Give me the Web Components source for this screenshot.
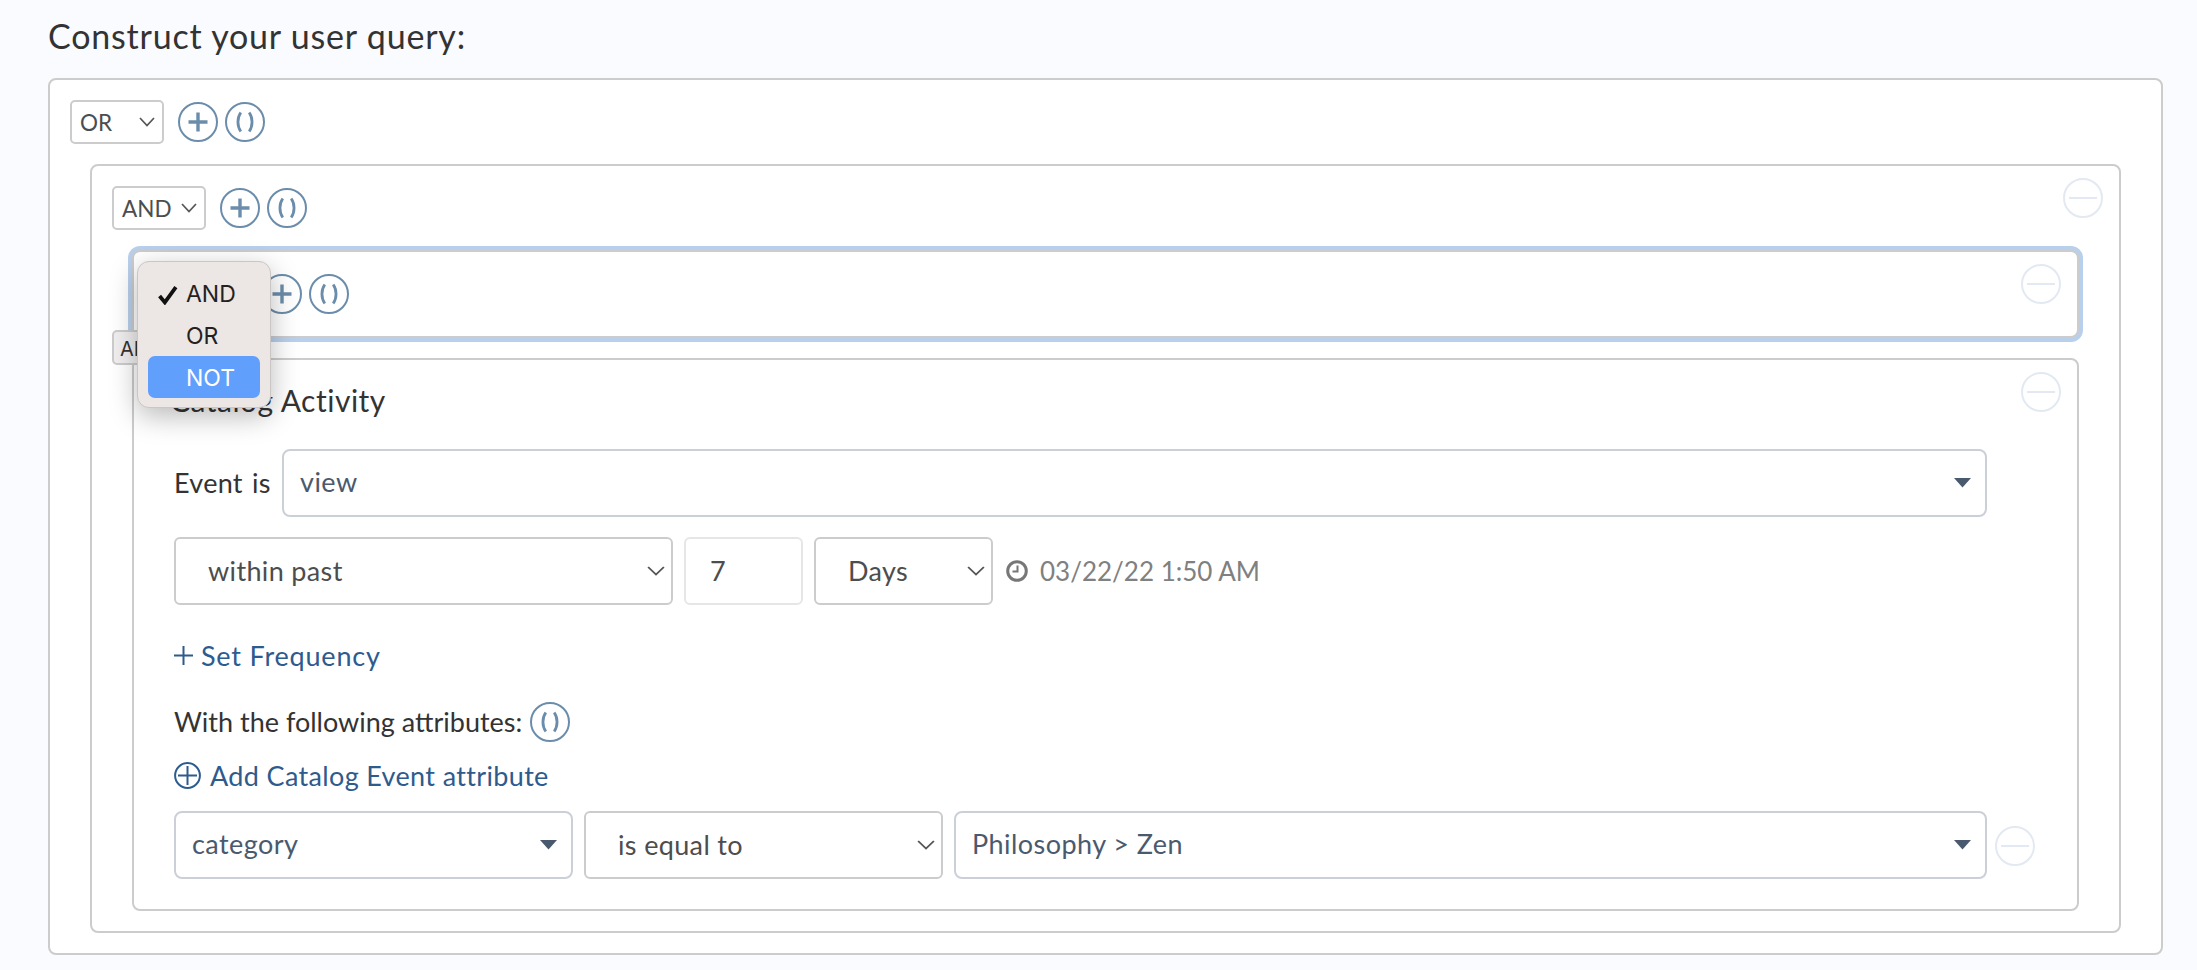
<!DOCTYPE html>
<html lang="en">
<head>
<meta charset="utf-8">
<title>Construct your user query</title>
<style>
  html, body { margin: 0; background: #fafbfe; }
  body { font-family: "Lato", "Liberation Sans", sans-serif; color: #333; }
</style>
</head>
<body>
<query-page>
  <span slot="title">Construct your user query:</span>

  <query-group op="OR" root>
    <query-group op="AND" removable>
      <query-group op="AND" removable focused></query-group>
      <catalog-rule></catalog-rule>
    </query-group>
  </query-group>

  <select-popup slot="overlay"></select-popup>
</query-page>

<script>
// Shared icon markup, all drawn on a 40 box
const ICONS = {
  plus: `<circle cx="20" cy="20" r="19" /><path d="M20 10.500v19M10.500 20h19" stroke-width="3.4" />`,
  parens: `<circle cx="20" cy="20" r="19" /><path d="M15.800 10.500C12 16 12 24 15.800 29.500M24.200 10.500C28 16 28 24 24.200 29.500" stroke-width="2.8" />`,
  minus: `<circle cx="20" cy="20" r="19" /><path d="M6 20h28" />`
};

class QueryIcon extends HTMLElement {
  connectedCallback() {
    const name = this.getAttribute('name');
    this.attachShadow({ mode: 'open' }).innerHTML = `
      <style>
        :host { display: block; width: 40px; height: 40px; flex: none; }
        svg { display: block; fill: none; stroke: ${name === 'minus' ? '#e3e9f2' : '#6b8dab'}; stroke-width: 2; }
      </style>
      <svg width="40" height="40" viewBox="0 0 40 40">${ICONS[name]}</svg>
    `;
  }
}

// Small and large native looking selects, with the chevron on the right
class QuerySelect extends HTMLElement {
  connectedCallback() {
    this.attachShadow({ mode: 'open' }).innerHTML = `
      <style>
        :host {
          display: flex;
          align-items: center;
          box-sizing: border-box;
          flex: none;
          height: 68px;
          padding: 0 0 2px 32px;
          border: 2px solid #ccc;
          border-radius: 6px;
          background: #fff;
          color: #4d4d4d;
          font-size: 27px;
          letter-spacing: .35px;
          position: relative;
        }
        :host([small]) { width: 94px; height: 44px; padding: 0 0 0 8px; font-size: 22.5px; letter-spacing: 0; border-radius: 5px; }
        svg {
          position: absolute;
          right: 6px;
          top: 50%;
          width: 18px;
          height: 10px;
          margin-top: -5px;
          fill: none;
          stroke: #555;
          stroke-width: 1.7;
        }
        :host([small]) svg { right: 7px; width: 16px; }
      </style>
      <slot></slot>
      <svg viewBox="0 0 16 10" preserveAspectRatio="none"><path d="M1 1l7 7.600L15 1" /></svg>
    `;
  }
}

// Searchable dropdown with the filled caret
class QueryCombo extends HTMLElement {
  connectedCallback() {
    this.attachShadow({ mode: 'open' }).innerHTML = `
      <style>
        :host {
          display: flex;
          align-items: center;
          box-sizing: border-box;
          height: 68px;
          padding: 0 0 4px 16px;
          border: 2px solid #cbd0d8;
          border-radius: 8px;
          background: #fff;
          color: #4a5a6e;
          font-size: 27px;
          letter-spacing: .45px;
          position: relative;
        }
        svg { position: absolute; right: 14px; top: 50%; margin-top: -5px; fill: #4a5a6e; }
      </style>
      <slot></slot>
      <svg width="17" height="10" viewBox="0 0 17 10"><path d="M0 0h17L8.500 9.600z" /></svg>
    `;
  }
}

class QueryGroup extends HTMLElement {
  connectedCallback() {
    const op = this.getAttribute('op');
    const removable = this.hasAttribute('removable');
    this.attachShadow({ mode: 'open' }).innerHTML = `
      <style>
        :host {
          display: block;
          position: relative;
          box-sizing: border-box;
          padding: 20px;
          border: 2px solid #ccc;
          border-radius: 8px;
          background: #fff;
        }
        :host([focused]) { box-shadow: 0 0 0 4px #b9d0ec; }
        .head { display: flex; align-items: center; height: 44px; }
        .actions { display: flex; gap: 7px; margin-left: 14px; }
        .remove { position: absolute; top: 12px; right: 16px; }
        ::slotted(*) { margin: 20px 20px 0 20px; }
      </style>
      <div class="head">
        <query-select small>${op}</query-select>
        <div class="actions">
          <query-icon name="plus"></query-icon>
          <query-icon name="parens"></query-icon>
        </div>
      </div>
      ${removable ? '<query-icon class="remove" name="minus"></query-icon>' : ''}
      <slot></slot>
    `;
  }
}

class CatalogRule extends HTMLElement {
  connectedCallback() {
    this.attachShadow({ mode: 'open' }).innerHTML = `
      <style>
        :host {
          display: block;
          position: relative;
          box-sizing: border-box;
          padding: 0 90px 30px 40px;
          border: 2px solid #ccc;
          border-radius: 8px;
          background: #fff;
          font-size: 27px;
          color: #333;
        }
        .remove { position: absolute; top: 12px; right: 16px; }
        h3 {
          box-sizing: border-box;
          height: 89px;
          margin: 0 0 0 -4px;
          padding-top: 20px;
          font-size: 30px;
          line-height: 40px;
          font-weight: 400;
          letter-spacing: .5px;
        }
        .row { display: flex; align-items: center; }
        .event span { flex: none; width: 108px; margin-bottom: 2px; word-spacing: 2px; letter-spacing: .3px; }
        .event query-combo { flex: 1; }
        .when { margin-top: 20px; }
        .number {
          box-sizing: border-box;
          width: 119px;
          height: 68px;
          margin: 0 11px;
          padding: 0 0 2px 24px;
          display: flex;
          align-items: center;
          border: 2px solid #e6e6e6;
          border-radius: 6px;
          color: #4d4d4d;
        }
        .stamp { display: flex; align-items: center; gap: 12px; margin-left: 13px; color: #808080; font-size: 26px; }
        .stamp svg { display: block; }
        .link { color: #2e5b8e; display: flex; align-items: center; }
        .freq { margin-top: 33px; height: 34px; gap: 8px; letter-spacing: .8px; }
        .attrs { margin-top: 30px; height: 40px; gap: 8px; }
        .attrs span { margin-bottom: 2px; }
        .add { margin-top: 16px; height: 34px; gap: 9px; letter-spacing: .35px; }
        .filter { margin-top: 19px; gap: 11px; }
        .filter .value { flex: 1; }
        .filter .name { width: 399px; flex: none; }
        .filter query-icon { margin: 2px -48px 0 -3px; }
      </style>
      <query-icon class="remove" name="minus"></query-icon>
      <h3>Catalog Activity</h3>
      <div class="row event">
        <span>Event is</span>
        <query-combo>view</query-combo>
      </div>
      <div class="row when">
        <query-select style="width:499px">within past</query-select>
        <div class="number">7</div>
        <query-select style="width:179px">Days</query-select>
        <div class="stamp">
          <svg width="22" height="22" viewBox="0 0 22 22" fill="none" stroke="#777">
            <circle cx="11" cy="11" r="9.300" stroke-width="3"/>
            <path d="M11.500 5.500v6H6.500" stroke-width="2"/>
          </svg>
          <span>03/22/22 1:50 AM</span>
        </div>
      </div>
      <div class="link freq">
        <svg width="19" height="19" viewBox="0 0 19 19" fill="none" stroke="#2e5b8e" stroke-width="2"><path d="M9.500 0v19M0 9.500h19"/></svg>
        <span>Set Frequency</span>
      </div>
      <div class="row attrs">
        <span>With the following attributes:</span>
        <query-icon name="parens"></query-icon>
      </div>
      <div class="link add">
        <svg width="27" height="27" viewBox="0 0 27 27" fill="none" stroke="#2e5b8e" stroke-width="2"><circle cx="13.500" cy="13.500" r="12.400"/><path d="M13.500 4v19M4 13.500h19"/></svg>
        <span>Add Catalog Event attribute</span>
      </div>
      <div class="row filter">
        <query-combo class="name">category</query-combo>
        <query-select style="width:359px">is equal to</query-select>
        <query-combo class="value">Philosophy &gt; Zen</query-combo>
        <query-icon name="minus"></query-icon>
      </div>
    `;
  }
}

// The open OS menu of the third group's select, plus the select peeking behind it
class SelectPopup extends HTMLElement {
  connectedCallback() {
    this.attachShadow({ mode: 'open' }).innerHTML = `
      <style>
        :host { display: block; font-family: "Inter", "Liberation Sans", sans-serif; }
        .behind {
          position: absolute;
          left: 112px;
          top: 330px;
          box-sizing: border-box;
          width: 60px;
          height: 35px;
          padding: 5px 0 0 6px;
          border: 2px solid #ccc;
          border-radius: 5px;
          background: #f0eeee;
          color: #333;
          font-size: 20px;
          overflow: hidden;
        }
        .menu {
          position: absolute;
          left: 137px;
          top: 261px;
          box-sizing: border-box;
          width: 134px;
          height: 147px;
          padding: 10px;
          border: 1px solid #c9c6c5;
          border-radius: 12px;
          background: #ece7e5;
          box-shadow: 0 8px 28px rgba(0, 0, 0, .28);
          color: #222;
          font-size: 23px;
        }
        .item {
          position: relative;
          height: 42px;
          line-height: 44px;
          padding-left: 38px;
          border-radius: 7px;
        }
        .item.active { background: #619ffd; color: #fff; }
        svg { position: absolute; left: 9px; top: 13px; fill: none; stroke: #111; stroke-width: 3.6; }
      </style>
      <div class="behind">AND</div>
      <div class="menu">
        <div class="item">
          <svg width="22" height="20" viewBox="0 0 20 19"><path d="M2 10.500l5 6L17.500 2" /></svg>AND
        </div>
        <div class="item">OR</div>
        <div class="item active">NOT</div>
      </div>
    `;
  }
}

class QueryPage extends HTMLElement {
  connectedCallback() {
    this.attachShadow({ mode: 'open' }).innerHTML = `
      <style>
        :host { display: block; box-sizing: border-box; width: 2197px; height: 970px; padding: 16px 34px 0 48px; overflow: hidden; }
        h1 { margin: 0 0 22px; font-size: 34px; line-height: 40px; font-weight: 400; letter-spacing: .8px; color: #333; }
      </style>
      <h1><slot name="title"></slot></h1>
      <slot></slot>
      <slot name="overlay"></slot>
    `;
  }
}

customElements.define('query-icon', QueryIcon);
customElements.define('query-select', QuerySelect);
customElements.define('query-combo', QueryCombo);
customElements.define('query-group', QueryGroup);
customElements.define('catalog-rule', CatalogRule);
customElements.define('select-popup', SelectPopup);
customElements.define('query-page', QueryPage);
</script>
</body>
</html>
